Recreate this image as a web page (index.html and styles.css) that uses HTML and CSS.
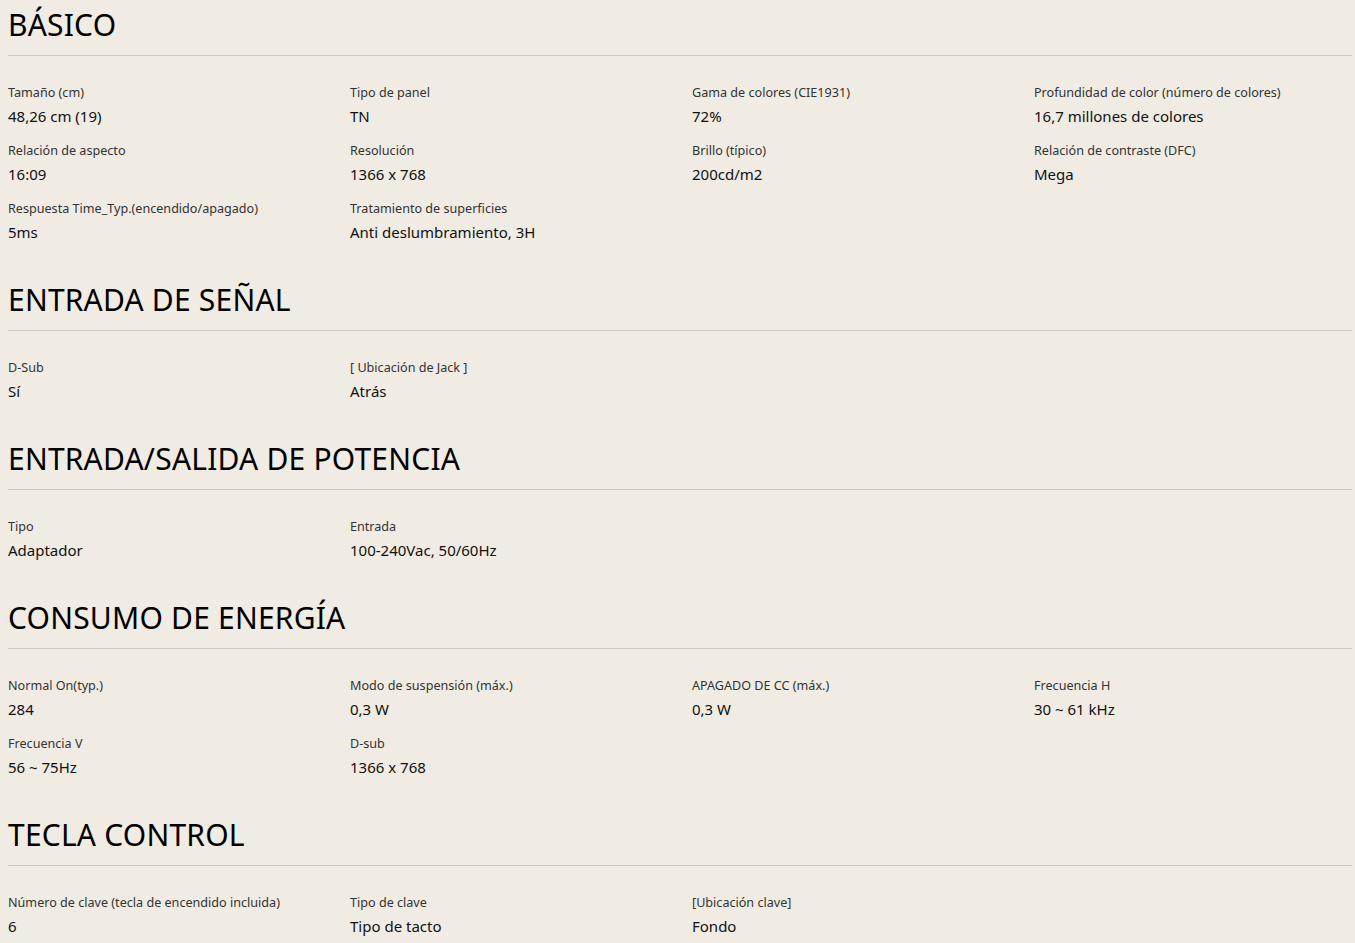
FILE: index.html
```html
<!DOCTYPE html>
<html lang="es">
<head>
    <meta charset="UTF-8">
    <meta name="viewport" content="width=device-width, initial-scale=1.0">
    <title>Especificaciones</title>
    <link rel="stylesheet" href="styles.css">
</head>
<body>
    <div class="specs">
        <!-- Basico -->
        <section class="spec-group">
            <h2>BÁSICO</h2>
            <div class="spec-grid">
                <div class="spec"><span class="label">Tamaño (cm)</span><span class="value">48,26 cm (19)</span></div>
                <div class="spec"><span class="label">Tipo de panel</span><span class="value">TN</span></div>
                <div class="spec"><span class="label">Gama de colores (CIE1931)</span><span class="value">72%</span></div>
                <div class="spec"><span class="label">Profundidad de color (número de colores)</span><span class="value">16,7 millones de colores</span></div>
                <div class="spec"><span class="label">Relación de aspecto</span><span class="value">16:09</span></div>
                <div class="spec"><span class="label">Resolución</span><span class="value">1366 x 768</span></div>
                <div class="spec"><span class="label">Brillo (típico)</span><span class="value">200cd/m2</span></div>
                <div class="spec"><span class="label">Relación de contraste (DFC)</span><span class="value">Mega</span></div>
                <div class="spec"><span class="label">Respuesta Time_Typ.(encendido/apagado)</span><span class="value">5ms</span></div>
                <div class="spec"><span class="label">Tratamiento de superficies</span><span class="value">Anti deslumbramiento, 3H</span></div>
            </div>
        </section>

        <!-- Entrada de senal -->
        <section class="spec-group">
            <h2>ENTRADA DE SEÑAL</h2>
            <div class="spec-grid">
                <div class="spec"><span class="label">D-Sub</span><span class="value">Sí</span></div>
                <div class="spec"><span class="label">[ Ubicación de Jack ]</span><span class="value">Atrás</span></div>
            </div>
        </section>

        <!-- Potencia -->
        <section class="spec-group">
            <h2>ENTRADA/SALIDA DE POTENCIA</h2>
            <div class="spec-grid">
                <div class="spec"><span class="label">Tipo</span><span class="value">Adaptador</span></div>
                <div class="spec"><span class="label">Entrada</span><span class="value">100-240Vac, 50/60Hz</span></div>
            </div>
        </section>

        <!-- Consumo -->
        <section class="spec-group">
            <h2>CONSUMO DE ENERGÍA</h2>
            <div class="spec-grid">
                <div class="spec"><span class="label">Normal On(typ.)</span><span class="value">284</span></div>
                <div class="spec"><span class="label">Modo de suspensión (máx.)</span><span class="value">0,3 W</span></div>
                <div class="spec"><span class="label">APAGADO DE CC (máx.)</span><span class="value">0,3 W</span></div>
                <div class="spec"><span class="label">Frecuencia H</span><span class="value">30 ~ 61 kHz</span></div>
                <div class="spec"><span class="label">Frecuencia V</span><span class="value">56 ~ 75Hz</span></div>
                <div class="spec"><span class="label">D-sub</span><span class="value">1366 x 768</span></div>
            </div>
        </section>

        <!-- Tecla control -->
        <section class="spec-group">
            <h2>TECLA CONTROL</h2>
            <div class="spec-grid">
                <div class="spec"><span class="label">Número de clave (tecla de encendido incluida)</span><span class="value">6</span></div>
                <div class="spec"><span class="label">Tipo de clave</span><span class="value">Tipo de tacto</span></div>
                <div class="spec"><span class="label">[Ubicación clave]</span><span class="value">Fondo</span></div>
            </div>
        </section>
    </div>
</body>
</html>
```

FILE: styles.css
```css
/* Page */
body {
    margin: 0;
    padding: 0;
    background: #f0ebe3;
    color: #111;
    font-family: 'Noto Sans', 'Open Sans', sans-serif;
    overflow: hidden;
}

.specs {
    padding: 7px 3px 0 8px;
}

/* Section */
.spec-group {
    margin-bottom: 39px;
}

.spec-group h2 {
    margin: 0;
    font-size: 30px;
    font-weight: 400;
    line-height: 36px;
    letter-spacing: 0.2px;
    padding-bottom: 12px;
    border-bottom: 1px solid #cbc8c3;
    color: #000;
}

/* Grid of specs */
.spec-grid {
    display: grid;
    grid-template-columns: repeat(4, 342px);
    row-gap: 14px;
    padding-top: 27px;
}

.spec {
    display: flex;
    flex-direction: column;
    gap: 2px;
}

.spec .label {
    font-size: 12.6px;
    line-height: 20px;
    color: #333;
}

.spec .value {
    font-size: 15px;
    line-height: 22px;
    color: #111;
}
```
